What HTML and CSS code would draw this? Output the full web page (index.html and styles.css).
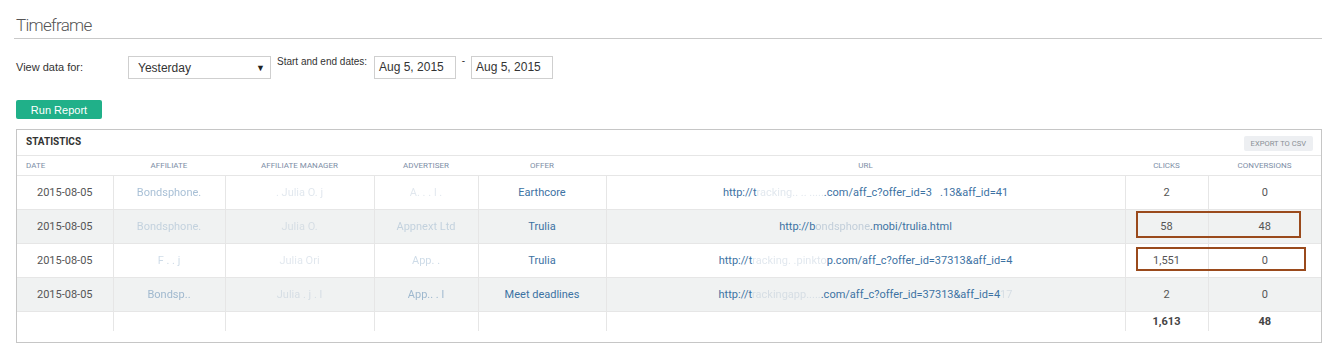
FILE: index.html
```html
<!DOCTYPE html>
<html lang="en">
<head>
<meta charset="UTF-8">
<title>Timeframe</title>
<link rel="stylesheet" href="styles.css">
</head>
<body>

<div class="page">
    <h2 class="title">Timeframe</h2>

    <div class="form-row">
        <label class="label-view">View data for:</label>
        <div class="select">
            <span>Yesterday</span>
            <span class="arrow">&#9660;</span>
        </div>
        <label class="label-dates">Start and end dates:</label>
        <div class="date-input">Aug 5, 2015</div>
        <span class="dash">-</span>
        <div class="date-input">Aug 5, 2015</div>
    </div>

    <button class="run-btn">Run Report</button>

    <div class="panel">
        <div class="panel-head">
            <span class="panel-title">STATISTICS</span>
            <span class="export-btn">EXPORT TO CSV</span>
        </div>
        <table class="stats">
            <colgroup>
                <col style="width:96px">
                <col style="width:112px">
                <col style="width:149px">
                <col style="width:104px">
                <col style="width:128px">
                <col style="width:519px">
                <col style="width:83px">
                <col style="width:113px">
            </colgroup>
            <thead>
                <tr>
                    <th class="left">Date</th>
                    <th>Affiliate</th>
                    <th>Affiliate Manager</th>
                    <th>Advertiser</th>
                    <th>Offer</th>
                    <th>URL</th>
                    <th>Clicks</th>
                    <th>Conversions</th>
                </tr>
            </thead>
            <tbody>
                <tr>
                    <td>2015-08-05</td>
                    <td><a class="hid">Bondsphone.</a></td>
                    <td><span class="hid faint">.  Julia O.  j</span></td>
                    <td><span class="hid faint">A. .     . l .</span></td>
                    <td><a>Earthcore</a></td>
                    <td><a>http://t<span class="hid faint">racking.. .. .....</span>.com/aff_c?offer_id=3&nbsp;&nbsp;&nbsp;.13&amp;aff_id=41</a></td>
                    <td>2</td>
                    <td>0</td>
                </tr>
                <tr class="alt">
                    <td>2015-08-05</td>
                    <td><a class="hid faint">Bondsphone.</a></td>
                    <td><span class="hid faint">Julia O.</span></td>
                    <td><a class="hid faint">Appnext Ltd</a></td>
                    <td><a>Trulia</a></td>
                    <td><a>http://b<span class="hid">ondsphone</span>.mobi/trulia.html</a></td>
                    <td>58</td>
                    <td>48</td>
                </tr>
                <tr>
                    <td>2015-08-05</td>
                    <td><a class="hid faint">F .  . j</a></td>
                    <td><span class="hid faint">Julia Ori</span></td>
                    <td><a class="hid faint">App. .</a></td>
                    <td><a>Trulia</a></td>
                    <td><a>http://t<span class="hid faint">racking. .pinkto</span>p.com/aff_c?offer_id=37313&amp;aff_id=4</a></td>
                    <td>1,551</td>
                    <td>0</td>
                </tr>
                <tr class="alt">
                    <td>2015-08-05</td>
                    <td><a class="hid">Bondsp..</a></td>
                    <td><span class="hid faint">Julia . j . l</span></td>
                    <td><a class="hid">App.. . l</a></td>
                    <td><a>Meet deadlines</a></td>
                    <td><a>http://t<span class="hid faint">rackingapp.....</span>.com/aff_c?offer_id=37313&amp;aff_id=4<span class="hid faint">17</span></a></td>
                    <td>2</td>
                    <td>0</td>
                </tr>
                <tr class="total">
                    <td></td>
                    <td></td>
                    <td></td>
                    <td></td>
                    <td></td>
                    <td></td>
                    <td>1,613</td>
                    <td>48</td>
                </tr>
            </tbody>
        </table>
        <div class="mark mark-one"></div>
        <div class="mark mark-two"></div>
    </div>
</div>

</body>
</html>
```

FILE: styles.css
```css
body {
    margin: 0;
    padding: 0;
    background-color: #fff;
    font-family: "Liberation Sans", Arial, sans-serif;
    color: #333;
}
.page {
    padding: 0 16px 0 16px;
    width: 1306px;
}
.title {
    margin: 0;
    padding: 15px 0 0 2px;
    height: 23px;
    font-family: Roboto, sans-serif;
    font-weight: 300;
    font-size: 17px;
    letter-spacing: -0.7px;
    color: #555;
    border-bottom: 1px solid #c9c9c9;
    margin-left: -2px;
}
.form-row {
    display: flex;
    align-items: flex-start;
    margin-top: 17px;
    height: 24px;
}
.label-view {
    width: 112px;
    font-size: 11px;
    padding-top: 5px;
    color: #333;
}
.select {
    width: 127px;
    height: 21px;
    border: 1px solid #cfcfcf;
    display: flex;
    align-items: center;
    justify-content: space-between;
    padding: 0 5px 0 9px;
    font-size: 12px;
    color: #333;
}
.select .arrow {
    font-size: 9px;
    color: #222;
}
.label-dates {
    font-size: 10px;
    margin-left: 6px;
    line-height: 12px;
    width: 97px;
}
.date-input {
    width: 76px;
    height: 21px;
    line-height: 21px;
    border: 1px solid #cfcfcf;
    padding-left: 4px;
    font-size: 12px;
    color: #333;
    background-color: #fff;
}
.dash {
    width: 15px;
    text-align: center;
    font-size: 10px;
    line-height: 10px;
}
.run-btn {
    display: block;
    margin-top: 20px;
    width: 86px;
    height: 19px;
    border: none;
    border-radius: 2px;
    background-color: #20b089;
    color: #fff;
    font-family: "Liberation Sans", Arial, sans-serif;
    font-size: 11px;
    padding: 0;
}
.panel {
    position: relative;
    margin-top: 10px;
    border: 1px solid #c6c6c6;
    height: 212px;
    font-family: Roboto, sans-serif;
}
.panel-head {
    height: 25px;
    border-bottom: 1px solid #e6e6e6;
    display: flex;
    align-items: center;
    justify-content: space-between;
    padding: 0 8px 0 9px;
}
.panel-title {
    font-weight: 700;
    font-size: 10px;
    color: #333;
    margin-top: -3px;
}
.export-btn {
    background-color: #edeff2;
    color: #8a8f96;
    font-size: 7.6px;
    padding: 0 7px;
    height: 15px;
    line-height: 15px;
    border-radius: 2px;
    margin-top: 2px;
}
.stats {
    border-collapse: collapse;
    table-layout: fixed;
    width: 1304px;
}
.stats th {
    height: 19px;
    font-size: 8px;
    font-weight: 400;
    text-transform: uppercase;
    color: #7d8ea6;
    text-align: center;
    padding: 0;
    border-bottom: 1px solid #e6e6e6;
}
.stats th.left {
    text-align: left;
    padding-left: 9px;
}
.stats td {
    height: 33px;
    padding: 0;
    text-align: center;
    font-size: 11px;
    color: #555;
    border-bottom: 1px solid #e6e6e6;
    border-left: 1px solid #e6e6e6;
    white-space: nowrap;
    overflow: hidden;
}
.stats td:first-child {
    border-left: none;
}
.stats a {
    color: #3d72a3;
    text-decoration: none;
}
.stats tr.alt td {
    background-color: #f0f2f2;
}
.stats tr.total td {
    height: 19px;
    font-weight: 700;
    color: #444;
    border-bottom: none;
}
.hid {
    color: #8aa3bd;
    opacity: 0.45;
    filter: blur(0.4px);
}
.faint {
    opacity: 0.25;
}
.mark {
    position: absolute;
    border: 2px solid #9a4a1c;
}
.mark-one {
    left: 1119px;
    top: 81px;
    width: 161px;
    height: 23px;
}
.mark-two {
    left: 1119px;
    top: 117px;
    width: 166px;
    height: 20px;
}
```
